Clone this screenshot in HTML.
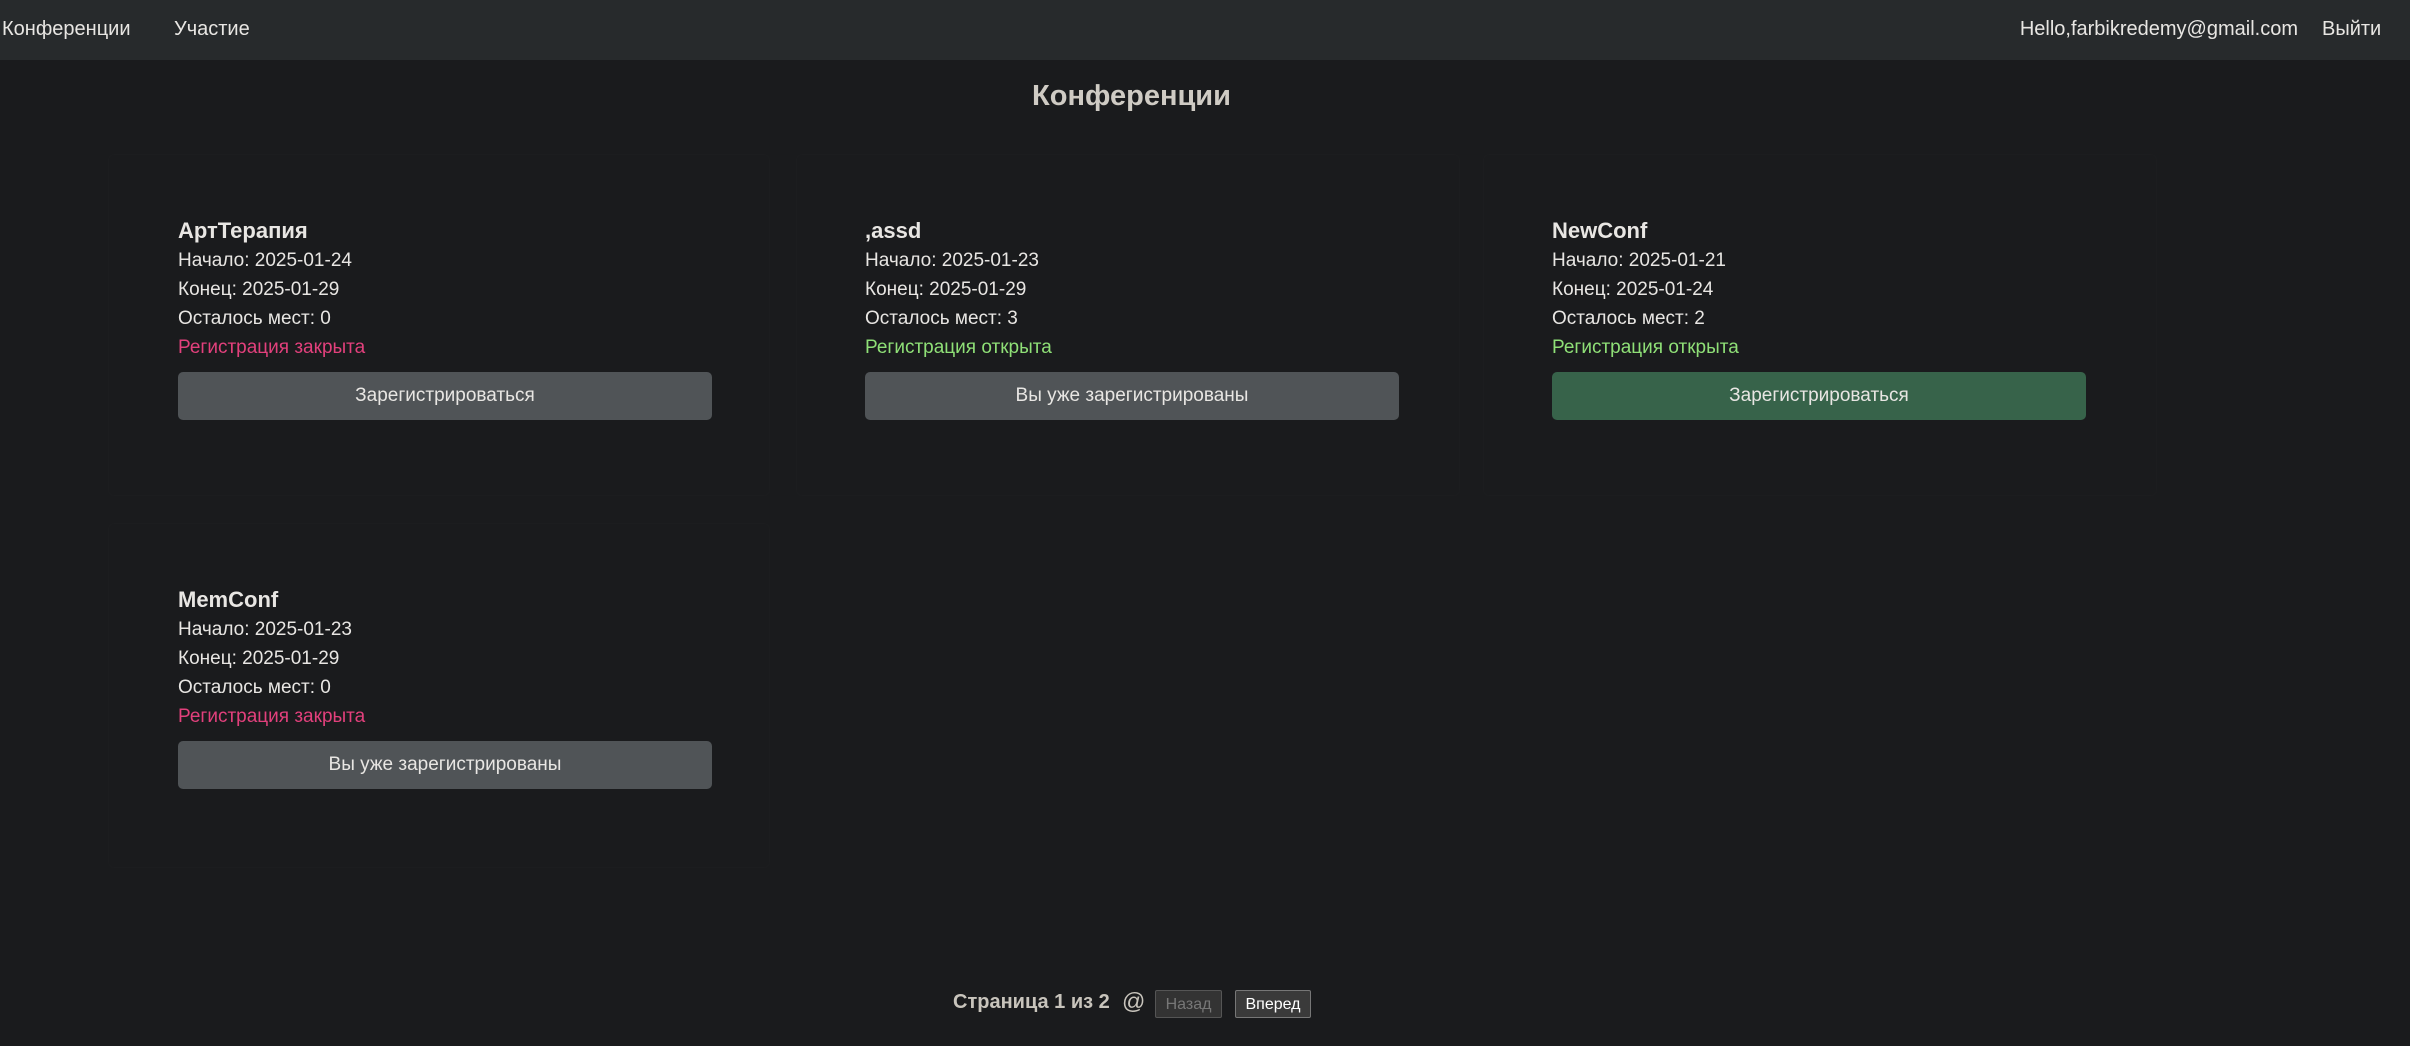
<!DOCTYPE html>
<html><head><meta charset="utf-8"><style>
*{margin:0;padding:0;box-sizing:border-box}
body{width:2410px;height:1046px;background:#1a1b1d;font-family:"Liberation Sans",sans-serif;color:#e8e6e3;position:relative;overflow:hidden}
.nav{position:absolute;left:0;top:0;width:2410px;height:60px;background:#272a2c;font-size:20px;color:#e8e6e3}
.nav span{position:absolute;top:18px;white-space:nowrap}
h1{position:absolute;left:0;width:2263px;text-align:center;top:80px;font-size:29px;font-weight:bold;color:#cfcbc4}
.card{position:absolute;border:1px solid #1c1d1f;border-radius:6px;background:#1a1b1d}
.c{position:absolute;width:534px;font-size:19px;line-height:29px}
.c b{font-size:22px;display:block;line-height:30px}
.red{color:#e2407c}.green{color:#8fe077}
.btn{margin-top:10px;height:48px;border-radius:5px;background:#505457;color:#e8e6e3;text-align:center;line-height:48px;font-size:19px}
.btn.g{background:#37634a}
.pg{position:absolute;font-size:20px}
</style></head><body>
<div class="nav">
<span style="left:2px">Конференции</span>
<span style="left:174px">Участие</span>
<span style="right:112px">Hello,farbikredemy@gmail.com</span>
<span style="left:2322px">Выйти</span>
</div>
<h1>Конференции</h1>
<div class="card" style="left:108px;top:154px;width:662px;height:342px"></div>
<div class="card" style="left:796px;top:154px;width:664px;height:342px"></div>
<div class="card" style="left:1483px;top:154px;width:674px;height:342px"></div>
<div class="card" style="left:108px;top:523px;width:662px;height:345px"></div>

<div class="c" style="left:178px;top:216px"><b>АртТерапия</b>Начало: 2025-01-24<br>Конец: 2025-01-29<br>Осталось мест: 0<br><span class="red">Регистрация закрыта</span><div class="btn">Зарегистрироваться</div></div>
<div class="c" style="left:865px;top:216px"><b>,assd</b>Начало: 2025-01-23<br>Конец: 2025-01-29<br>Осталось мест: 3<br><span class="green">Регистрация открыта</span><div class="btn">Вы уже зарегистрированы</div></div>
<div class="c" style="left:1552px;top:216px"><b>NewConf</b>Начало: 2025-01-21<br>Конец: 2025-01-24<br>Осталось мест: 2<br><span class="green">Регистрация открыта</span><div class="btn g">Зарегистрироваться</div></div>
<div class="c" style="left:178px;top:585px"><b>MemConf</b>Начало: 2025-01-23<br>Конец: 2025-01-29<br>Осталось мест: 0<br><span class="red">Регистрация закрыта</span><div class="btn">Вы уже зарегистрированы</div></div>

<div class="pg" style="left:953px;top:991px;font-weight:bold;color:#c8c4bc">Страница 1 из 2</div>
<div class="pg" style="left:1122px;top:988px;font-size:23px;color:#c8c4bc">@</div>
<div class="pg" style="left:1155px;top:990px;width:67px;height:28px;border:1px solid #555;border-radius:2px;background:#333;color:#777;font-size:16px;text-align:center;line-height:27px">Назад</div>
<div class="pg" style="left:1235px;top:990px;width:76px;height:28px;border:1px solid #777;border-radius:2px;background:#3a3a3a;color:#fff;font-size:16px;text-align:center;line-height:27px">Вперед</div>
</body></html>
